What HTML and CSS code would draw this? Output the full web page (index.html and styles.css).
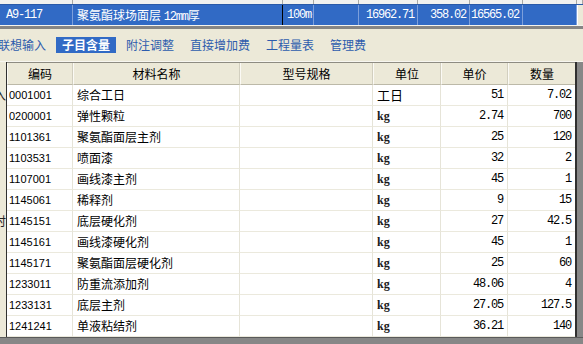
FILE: index.html
```html
<!DOCTYPE html>
<html lang="zh-CN">
<head>
  <meta charset="UTF-8"/>
  <title>子目含量</title>
  <link rel="stylesheet" href="styles.css">
</head>
<body>
  <div class="top">
    <div class="prev-row">
      <span></span><span></span><span></span><span></span><span></span><span></span><span></span><span></span><span></span>
    </div>
    <div class="sel-row">
      <span class="mono">A9-117</span>
      <span class="focus">聚氨酯球场面层 <span class="mono">12mm</span>厚</span>
      <span class="mono clip">100m²</span>
      <span></span>
      <span class="mono num">16962.71</span>
      <span class="mono num">358.02</span>
      <span class="mono num">16565.02</span>
      <span></span>
      <span class="end"></span>
    </div>
    <div class="split"></div>
  </div>

  <div class="tabs">
    <span class="tab">联想输入</span>
    <span class="tab active">子目含量</span>
    <span class="tab">附注调整</span>
    <span class="tab">直接增加费</span>
    <span class="tab">工程量表</span>
    <span class="tab">管理费</span>
  </div>

  <div class="main">
    <div class="side">
      <div class="side-head"></div>
      <div class="side-row">入</div>
      <div class="side-row"></div>
      <div class="side-row"></div>
      <div class="side-row"></div>
      <div class="side-row"></div>
      <div class="side-row"></div>
      <div class="side-row">时</div>
    </div>

    <div class="grid">
      <div class="row head">
        <span>编码</span><span>材料名称</span><span>型号规格</span><span>单位</span><span>单价</span><span>数量</span>
      </div>
      <div class="row"><span class="code">0001001</span><span class="name">综合工日</span><span></span><span class="unit cn">工日</span><span class="num">51</span><span class="num">7.02</span></div>
      <div class="row"><span class="code">0200001</span><span class="name">弹性颗粒</span><span></span><span class="unit">kg</span><span class="num">2.74</span><span class="num">700</span></div>
      <div class="row"><span class="code">1101361</span><span class="name">聚氨酯面层主剂</span><span></span><span class="unit">kg</span><span class="num">25</span><span class="num">120</span></div>
      <div class="row"><span class="code">1103531</span><span class="name">喷面漆</span><span></span><span class="unit">kg</span><span class="num">32</span><span class="num">2</span></div>
      <div class="row"><span class="code">1107001</span><span class="name">画线漆主剂</span><span></span><span class="unit">kg</span><span class="num">45</span><span class="num">1</span></div>
      <div class="row"><span class="code">1145061</span><span class="name">稀释剂</span><span></span><span class="unit">kg</span><span class="num">9</span><span class="num">15</span></div>
      <div class="row"><span class="code">1145151</span><span class="name">底层硬化剂</span><span></span><span class="unit">kg</span><span class="num">27</span><span class="num">42.5</span></div>
      <div class="row"><span class="code">1145161</span><span class="name">画线漆硬化剂</span><span></span><span class="unit">kg</span><span class="num">45</span><span class="num">1</span></div>
      <div class="row"><span class="code">1145171</span><span class="name">聚氨酯面层硬化剂</span><span></span><span class="unit">kg</span><span class="num">25</span><span class="num">60</span></div>
      <div class="row"><span class="code">1233011</span><span class="name">防重流添加剂</span><span></span><span class="unit">kg</span><span class="num">48.06</span><span class="num">4</span></div>
      <div class="row"><span class="code">1233131</span><span class="name">底层主剂</span><span></span><span class="unit">kg</span><span class="num">27.05</span><span class="num">127.5</span></div>
      <div class="row"><span class="code">1241241</span><span class="name">单液粘结剂</span><span></span><span class="unit">kg</span><span class="num">36.21</span><span class="num">140</span></div>
    </div>

    <div class="gutter"></div>
  </div>
  <div class="bottom"></div>
</body>
</html>
```

FILE: styles.css
```css
body {
  margin: 0;
  width: 583px;
  height: 344px;
  overflow: hidden;
  background: #ece9d8;
  font-family: "Noto Sans CJK SC", "Liberation Sans", sans-serif;
  font-size: 12px;
  color: #000;
}
.mono {
  font-family: "Liberation Mono", "Noto Sans CJK SC", monospace;
  font-size: 12px;
  letter-spacing: -1.2px;
}

/* top: selected quota row */
.top {
  height: 29px;
}
.prev-row, .sel-row {
  display: grid;
  grid-template-columns: 73px 210px 31px 45px 59px 52px 53px 54px 6px;
}
.prev-row {
  height: 4px;
  background: #f1f1ef;
}
.prev-row span {
  border-right: 1px solid #a9a9a4;
}
.sel-row {
  height: 21px;
  background: #316ac5;
  color: #fff;
  border-top: 1px solid #2a5aa8;
  box-sizing: border-box;
}
.sel-row > span {
  border-right: 1px solid #7c9fdb;
  line-height: 20px;
  padding-left: 6px;
  white-space: nowrap;
  overflow: hidden;
}
.sel-row > span:nth-child(2) {
  padding-left: 4px;
  font-size: 12px;
}
.sel-row > span.focus {
  border-right: 1px solid #000;
}
.sel-row > span.clip {
  padding-left: 4px;
}
.sel-row > span.num {
  text-align: right;
  padding: 0 3px 0 0;
}
.sel-row > span.end {
  background: #ece9d8;
  border-left: 1px solid #fff;
  border-right: none;
}
.split {
  height: 3px;
  border-top: 1px solid #f4f3ee;
  background: #858585;
}

/* tabs */
.tabs {
  height: 33px;
  box-sizing: border-box;
  padding-top: 8px;
  margin-left: -8px;
  display: flex;
  gap: 4px;
  border-bottom: 1px solid #f7f6f0;
}
.tab {
  height: 16px;
  line-height: 16px;
  padding: 0 6px;
  color: #2d5cad;
}
.tab.active {
  background: #316ac5;
  color: #fff;
  font-weight: bold;
}

/* material grid */
.main {
  display: flex;
  height: 275px;
}
.side {
  width: 6px;
  overflow: hidden;
}
.side-head {
  height: 23px;
}
.side-row {
  height: 21px;
  line-height: 20px;
  display: flex;
  justify-content: flex-end;
  white-space: nowrap;
  color: #222;
}
.grid {
  width: 571px;
  box-sizing: border-box;
  border-left: 1px solid #303030;
  border-right: 2px solid #303030;
  border-bottom: 1px solid #404040;
  background: #fff;
}
.row {
  display: grid;
  grid-template-columns: 66px 167px 133px 68px 67px 67px;
  height: 21px;
}
.row > span {
  box-sizing: border-box;
  border-right: 1px solid #e6e4d8;
  border-bottom: 1px solid #ebe9dd;
  line-height: 20px;
  white-space: nowrap;
  overflow: hidden;
}
.row > span:last-child {
  border-right: none;
}
.row.head {
  height: 23px;
  background: #ece9d8;
  border-top: 1px solid #8e8c82;
  box-sizing: border-box;
}
.row.head > span {
  text-align: center;
  line-height: 21px;
  border-right: 1px solid #d2cfbf;
  border-left: 1px solid #fbfaf5;
  border-bottom: 1px solid #bcb9a8;
}
.row.head > span:last-child {
  border-right: none;
}
.code {
  padding-left: 2px;
  font-family: "Liberation Sans", sans-serif;
  font-size: 11px;
}
.name {
  padding-left: 4px;
}
.unit {
  padding-left: 4px;
  font-family: "Liberation Serif", serif;
  font-weight: bold;
  font-size: 12px;
  color: #1a1a1a;
}
.unit.cn {
  font-family: "Noto Sans CJK SC", sans-serif;
  font-weight: normal;
  font-size: 13px;
  color: #000;
}
.num {
  text-align: right;
  padding-right: 4px;
  font-family: "Liberation Mono", monospace;
  font-size: 12px;
  letter-spacing: -1.2px;
}
.gutter {
  width: 6px;
  background: #878787;
}
.bottom {
  height: 7px;
  border-top: 1px solid #5a5a5a;
  background: #878787;
}
```
